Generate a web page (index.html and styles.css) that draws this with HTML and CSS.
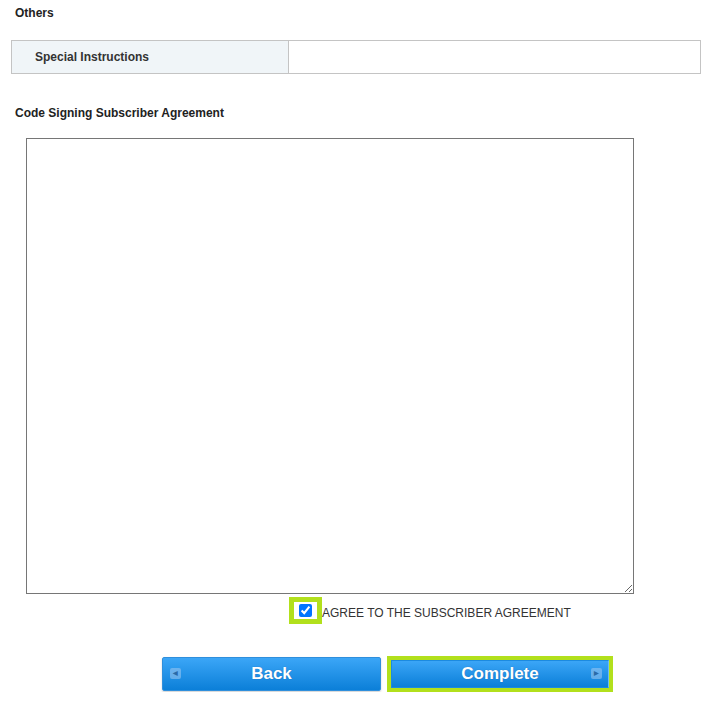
FILE: index.html
```html
<!DOCTYPE html>
<html lang="en">
<head>
    <meta charset="UTF-8">
    <title>Order Confirmation</title>
    <link rel="stylesheet" href="styles.css">
</head>
<body>
    <div class="group-title">Others</div>

    <table class="info-table">
        <tr>
            <th>Special Instructions</th>
            <td></td>
        </tr>
    </table>

    <div class="agreement-title">Code Signing Subscriber Agreement</div>

    <div class="agreement-box">
        <textarea class="agreement-text" readonly></textarea>
    </div>

    <div class="agree-row">
        <span class="highlight"><input type="checkbox" id="agree" checked></span>
        <label for="agree">AGREE TO THE SUBSCRIBER AGREEMENT</label>
    </div>

    <div class="buttons">
        <button class="btn">
            <span class="btn-icon left">&#9664;</span>
            Back
        </button>
        <span class="highlight btn-frame">
            <button class="btn btn-complete">
                Complete
                <span class="btn-icon right">&#9654;</span>
            </button>
        </span>
    </div>
</body>
</html>
```

FILE: styles.css
```css
body {
    margin: 0;
    font-family: 'Liberation Sans', Arial, sans-serif;
    font-size: 12px;
    color: #333;
    background: #fff;
}
.group-title {
    font-weight: bold;
    padding: 6px 0 0 15px;
    line-height: 15px;
    color: #222;
}
.info-table {
    border-collapse: collapse;
    margin: 19px 0 0 11px;
    width: 690px;
}
.info-table th,
.info-table td {
    border: 1px solid #c4c4c4;
    height: 31px;
    padding: 0 0 1px 0;
}
.info-table th {
    width: 253px;
    background-color: #f0f5f8;
    text-align: left;
    padding-left: 23px;
    font-size: 12px;
    color: #333;
}
.agreement-title {
    font-weight: bold;
    color: #222;
    padding-left: 15px;
    margin-top: 32px;
    line-height: 15px;
}
.agreement-box {
    padding: 17px 0 0 26px;
    line-height: 0;
}
.agreement-text {
    box-sizing: border-box;
    width: 608px;
    height: 456px;
    margin: 0;
    border: 1px solid #767676;
}
.agree-row {
    display: flex;
    align-items: center;
    margin: 3px 0 0 289px;
}
.agree-row label {
    font-size: 12px;
    color: #333;
    padding-top: 4px;
}
.highlight {
    display: inline-block;
    border: 5px solid #b2e01c;
    line-height: 0;
}
.agree-row .highlight {
    padding: 2px 5px;
}
.agree-row input {
    margin: 0;
    width: 13px;
    height: 13px;
}
.buttons {
    display: flex;
    align-items: center;
    margin: 32px 0 0 162px;
    gap: 6px;
}
.btn {
    position: relative;
    width: 219px;
    height: 34px;
    border: 1px solid #2f8fdc;
    border-radius: 2px;
    background: linear-gradient(#3ba6f7, #0b7fd8);
    color: #fff;
    font-family: 'Liberation Sans', Arial, sans-serif;
    font-size: 17px;
    font-weight: bold;
    text-shadow: 0 0 1px rgba(0, 40, 90, 0.4);
    box-shadow: 0 1px 2px rgba(0, 0, 0, 0.2);
    cursor: pointer;
}
.btn-frame {
    border-width: 4px;
}
.btn-complete {
    width: 218px;
    height: 28px;
    border-radius: 0;
    box-shadow: none;
    border-color: #1c8ae0 #6cbaf5 #1c8ae0 #1c8ae0;
}
.btn-icon {
    position: absolute;
    top: 50%;
    width: 11px;
    height: 11px;
    margin-top: -6px;
    border-radius: 2px;
    background: rgba(160, 200, 240, 0.55);
    color: #2a6aa8;
    font-size: 6px;
    line-height: 11px;
    text-align: center;
    text-shadow: none;
}
.btn-icon.left {
    left: 7px;
}
.btn-icon.right {
    right: 6px;
}
```
